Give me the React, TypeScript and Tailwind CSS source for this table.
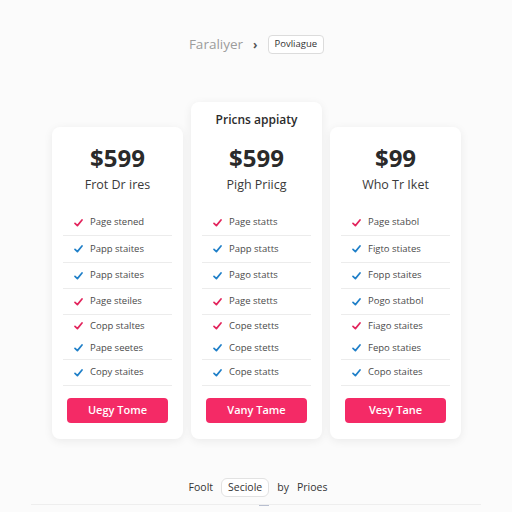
import React from 'react';

type Row = { text: string; red: boolean; h: string; line: boolean };

type Plan = {
	title?: string;
	price: string;
	name: string;
	rows: Row[];
	cta: string;
};

const heights = ['h-[26px]', 'h-[27px]', 'h-[26px]', 'h-[26px]', 'h-[22px]', 'h-[23px]', 'h-[26px]'];
const lines = [true, true, true, true, false, true, true];

function makeRows(texts: string[], reds: boolean[]): Row[] {
	return texts.map((text, i) => ({ text, red: reds[i], h: heights[i], line: lines[i] }));
}

const plans: Plan[] = [
	{
		price: '$599',
		name: 'Frot Dr ires',
		rows: makeRows(
			['Page stened', 'Papp staites', 'Papp staites', 'Page steiles', 'Copp staltes', 'Pape seetes', 'Copy staites'],
			[true, false, false, true, true, false, false],
		),
		cta: 'Uegy Tome',
	},
	{
		title: 'Pricns appiaty',
		price: '$599',
		name: 'Pigh Priicg',
		rows: makeRows(
			['Page statts', 'Papp statts', 'Pago statts', 'Page stetts', 'Cope stetts', 'Cope stetts', 'Cope statts'],
			[true, false, false, true, true, false, false],
		),
		cta: 'Vany Tame',
	},
	{
		price: '$99',
		name: 'Who Tr Iket',
		rows: makeRows(
			['Page stabol', 'Figto stiates', 'Fopp staites', 'Pogo statbol', 'Fiago staites', 'Fepo staties', 'Copo staites'],
			[true, false, false, false, true, false, false],
		),
		cta: 'Vesy Tane',
	},
];

function Check({ red }: { red: boolean }) {
	return (
		<svg width="9" height="8" viewBox="0 0 9 8" className="shrink-0">
			<path
				d="M1 4.3 L3.4 6.6 L8 1"
				fill="none"
				stroke={red ? '#e2245c' : '#1f7fc8'}
				strokeWidth="1.7"
				strokeLinecap="round"
				strokeLinejoin="round"
			/>
		</svg>
	);
}

function PlanCard({ plan }: { plan: Plan }) {
	const featured = !!plan.title;
	return (
		<div
			className={`w-[131px] bg-white rounded-lg shadow-[0_2px_10px_rgba(0,0,0,0.07)] flex flex-col px-[11px] pb-[16px] ${
				featured ? 'pt-[9px]' : 'pt-[15px]'
			}`}
		>
			{featured && (
				<div className="h-[17px] text-center text-[12px] font-semibold text-[#2b2b2b] leading-[17px] mb-[14px]">{plan.title}</div>
			)}
			<div className="text-center text-[24px] font-bold text-[#2a2a2a] leading-[32px]">{plan.price}</div>
			<div className="text-center text-[12.5px] text-[#3a3a3a] leading-[18px] mt-[2px]">{plan.name}</div>
			<ul className="mt-[16px] flex flex-col">
				{plan.rows.map((r, i) => (
					<li
						key={i}
						className={`${r.h} flex items-center gap-[7px] pl-[11px] text-[9.5px] text-[#4a4a4a] ${
							r.line ? 'border-b border-[#ececec]' : ''
						}`}
					>
						<Check red={r.red} />
						<span>{r.text}</span>
					</li>
				))}
			</ul>
			<button className="mt-[12px] mx-[4px] h-[25px] rounded-[4px] bg-[#f42a66] text-white text-[11px] font-semibold">
				{plan.cta}
			</button>
		</div>
	);
}

export default function App() {
	return (
		<div className="w-[512px] h-[512px] bg-[#fbfbfb] flex flex-col items-center font-['Open_Sans','Noto_Sans',sans-serif] overflow-hidden">
			<div className="mt-[35px] h-[19px] flex items-center gap-[9px] pl-[1px]">
				<span className="text-[13.5px] text-[#9c9c9c]">Faraliyer</span>
				<span className="text-[12px] font-bold text-[#555] mx-[1px]">›</span>
				<span className="h-[19px] px-[6px] flex items-center border border-[#dcdcdc] rounded-[4px] bg-white text-[9.5px] text-[#333]">
					Povliague
				</span>
			</div>
			<div className="mt-[48px] flex items-end gap-[8px] pl-[1px]">
				{plans.map((p, i) => (
					<PlanCard key={i} plan={p} />
				))}
			</div>
			<div className="mt-[39px] flex items-center gap-[8px] text-[10.5px] text-[#333] pl-[4px]">
				<span>Foolt</span>
				<span className="h-[19px] px-[6px] flex items-center border border-[#e2e2e2] rounded-[6px] bg-white">Seciole</span>
				<span>by</span>
				<span>Prioes</span>
			</div>
			<div className="mt-[7px] w-[450px] border-t border-[#eeeeee] flex justify-center">
				<div className="w-[10px] h-[1px] bg-[#b8bfd0] ml-[16px]" />
			</div>
		</div>
	);
}
